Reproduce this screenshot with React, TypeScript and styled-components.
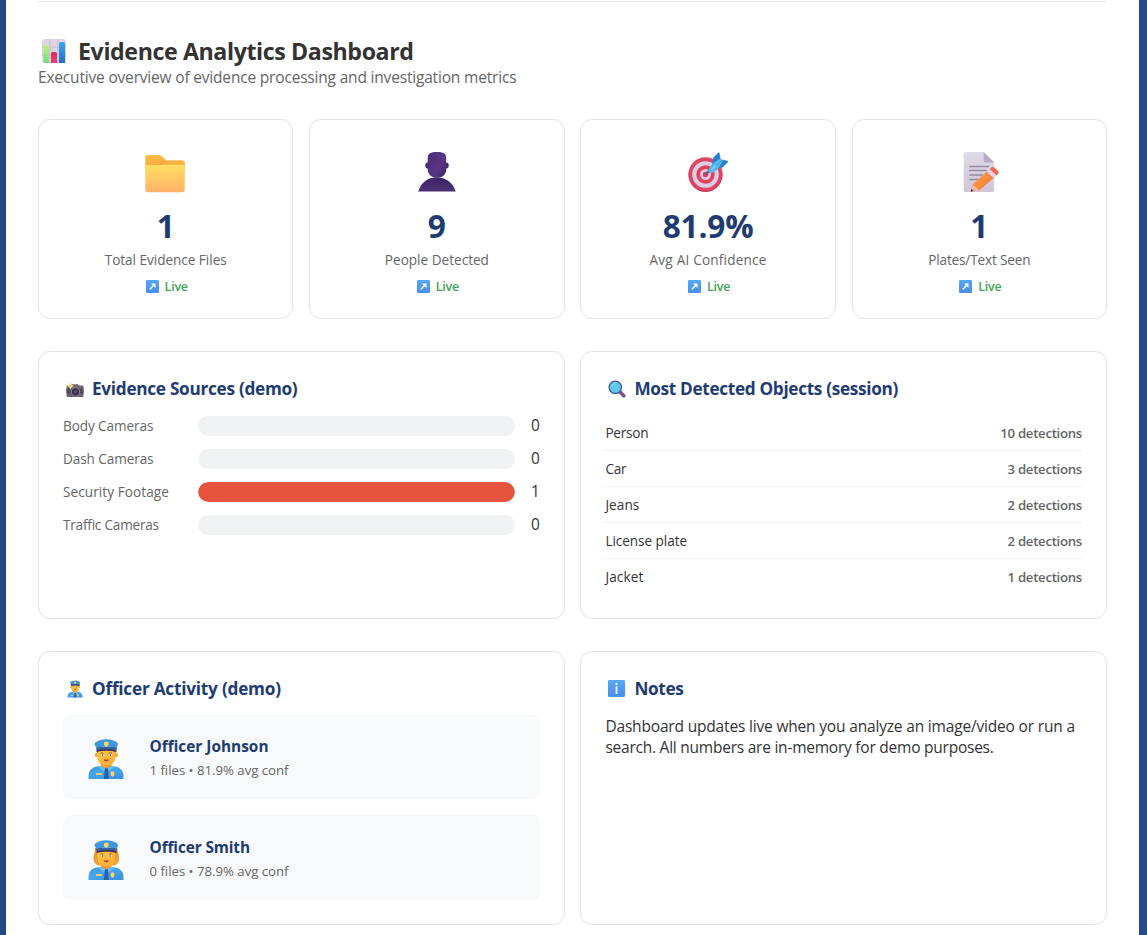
import React, { ReactNode } from 'react';
import styled, { createGlobalStyle } from 'styled-components';

const navy = '#1e3c72';

const GlobalStyle = createGlobalStyle`
  * { box-sizing: border-box; }
  html, body { margin: 0; padding: 0; height: 100%; overflow: hidden; }
  body {
    font-family: "Segoe UI", "Open Sans", "Noto Sans", sans-serif;
    font-size: 15.5px;
    color: #333;
    background: linear-gradient(90deg, #234781, #264d8b);
  }
  h1, h2, h3, p { margin: 0; }
  svg { display: block; flex: none; }
`;

const Page = styled.main`
  height: 935px;
  margin: 0 8px 0 6px;
  padding: 1px 32px 0;
  background: #fff;
`;

const Header = styled.header`
  height: 118px;
  border-top: 1px solid #e3e5e6;
  padding-top: 34px;
`;

const Tracked = styled.span<{ $ls?: number }>`
  letter-spacing: ${(p) => p.$ls ?? 0}px;
  white-space: nowrap;
`;

const Title = styled.h1`
  display: flex;
  align-items: center;
  gap: 11px;
  height: 30px;
  padding-left: 3px;
  font-size: 23.2px;
  line-height: 30px;
  font-weight: 700;
`;

const Subtitle = styled.p`
  margin-top: 1px;
  line-height: 21px;
  color: #666;
`;

const StatGrid = styled.section`
  display: grid;
  grid-template-columns: 255.4px 255.4px 255.4px 1fr;
  gap: 15.8px;
  margin-bottom: 32px;
`;

const Card = styled.div`
  border: 1px solid #e1e3e7;
  border-radius: 12px;
  background: #fff;
`;

const StatCard = styled(Card)`
  height: 200px;
  padding-top: 31px;
  display: flex;
  flex-direction: column;
  align-items: center;
`;

const StatValue = styled.div`
  margin-top: 11px;
  height: 44px;
  line-height: 44px;
  font-size: 31.6px;
  font-weight: 700;
  color: ${navy};
`;

const StatLabel = styled.div`
  margin-top: 2px;
  height: 20px;
  line-height: 20px;
  font-size: 13.6px;
  color: #666;
`;

const Live = styled.div`
  display: flex;
  align-items: center;
  gap: 6px;
  margin-top: 8px;
  padding-left: 2px;
  height: 18px;
  font-size: 12.5px;
  line-height: 18px;
  font-weight: 600;
  color: #3fa458;

  svg { margin-bottom: 1px; }
`;

const PanelGrid = styled.section<{ $height: number }>`
  display: grid;
  grid-template-columns: 526.6px 1fr;
  grid-template-rows: ${(p) => p.$height}px;
  gap: 15.8px;
  margin-bottom: 32px;
`;

const Panel = styled(Card)`
  padding: 24px;
`;

const PanelTitle = styled.h2`
  display: flex;
  align-items: center;
  height: 25px;
  font-size: 17.2px;
  line-height: 25px;
  font-weight: 700;
  color: ${navy};
`;

const TitleIcon = styled.span`
  display: flex;
  justify-content: center;
  width: 23px;
  margin-right: 6px;
`;

const SourceList = styled.div`
  display: grid;
  gap: 13px;
  margin-top: 15px;
`;

const SourceRow = styled.div`
  display: flex;
  align-items: center;
  height: 20px;
`;

const SourceName = styled.div`
  width: 135px;
  height: 20px;
  line-height: 19px;
  font-size: 13.6px;
  color: #666;
`;

const Track = styled.div`
  flex: 1;
  height: 20px;
  border-radius: 10px;
  background: #f1f2f4;
  overflow: hidden;
`;

const Fill = styled.div`
  height: 100%;
  border-radius: 10px;
  background: #e5533c;
`;

const SourceCount = styled.div`
  width: 24.5px;
  height: 20px;
  padding-left: 16px;
  font-size: 15.4px;
  line-height: 19px;
`;

const ObjectList = styled.div`
  margin-top: 14px;
`;

const ObjectRow = styled.div`
  display: flex;
  justify-content: space-between;
  align-items: center;
  height: 36px;
  font-size: 13.6px;
  border-bottom: 1px solid #f0f1f3;
  &:last-child { border-bottom-color: transparent; }
`;

const Detections = styled.span`
  font-size: 13.2px;
  font-weight: 600;
  color: #666;
  padding-top: 1px;
`;

const OfficerList = styled.div`
  display: grid;
  gap: 16px;
  margin-top: 14px;
`;

const OfficerCard = styled.div`
  display: flex;
  align-items: center;
  height: 84.4px;
  padding: 4px 0 0 22px;
  border-radius: 8px;
  background: #f8f9fb;
`;

const OfficerText = styled.div`
  margin: -1px 0 0 22.5px;
`;

const OfficerName = styled.div`
  font-size: 15.4px;
  line-height: 24px;
  font-weight: 700;
  color: ${navy};
`;

const OfficerMeta = styled.div`
  font-size: 13.2px;
  line-height: 23px;
  color: #666;
`;

const Note = styled.p`
  margin-top: 15px;
  line-height: 21px;
`;

const ChartIcon = () => (
  <svg width="26" height="26" viewBox="0 0 26 26">
    <defs>
      <linearGradient id="gGreen" x1="0" y1="0" x2="0" y2="1"><stop stopColor="#c5f07a" /><stop offset="1" stopColor="#70dc80" /></linearGradient>
      <linearGradient id="gRed" x1="0" y1="0" x2="0" y2="1"><stop stopColor="#d42c68" /><stop offset="1" stopColor="#f23c78" /></linearGradient>
      <linearGradient id="gBlue" x1="0" y1="0" x2="0" y2="1"><stop stopColor="#3ba7ee" /><stop offset="1" stopColor="#2170c4" /></linearGradient>
    </defs>
    <rect x="1" y="1" width="24" height="24" rx="3" fill="#dcd5e4" />
    <path d="M1 9h24M1 17h24M9 1v24M17 1v24" stroke="#c4bccf" strokeWidth="1" />
    <path d="M2.500 25V8.500q0-1.500 1.500-1.500h2.500q1.500 0 1.500 1.500V25z" fill="url(#gGreen)" />
    <path d="M10 25v-9.500q0-1.500 1.500-1.500h3q1.500 0 1.500 1.500V25z" fill="url(#gRed)" />
    <path d="M18 25V5.500q0-1.500 1.500-1.500h3q1.500 0 1.500 1.500V25z" fill="url(#gBlue)" />
  </svg>
);

const FolderIcon = () => (
  <svg width="42" height="42" viewBox="0.7 0 42 42">
    <defs>
      <linearGradient id="fFront" x1="0" y1="0" x2="0" y2="1"><stop stopColor="#ffdf62" /><stop offset="1" stopColor="#ffb268" /></linearGradient>
      <linearGradient id="fBack" x1="0" y1="0" x2="0" y2="1"><stop stopColor="#ffbd45" /><stop offset="1" stopColor="#f3a23a" /></linearGradient>
    </defs>
    <path d="M1 6q0-2 2-2h12q1.300 0 2.200.9L20.500 8q1 1.200 2.500 1.200h15q2.500 0 2.500 2.500V20H1z" fill="url(#fBack)" />
    <path d="M1 16q0-2 2-2h12.500q1.200 0 2-.1.800-.1 2-.1H38.500q2 0 2 2v22.400q0 3-3 3H4q-3 0-3-3z" fill="url(#fFront)" />
  </svg>
);

const PersonIcon = () => (
  <svg width="42" height="42" viewBox="0.3 0 42 42">
    <defs>
      <linearGradient id="pBody" x1="0" y1="0" x2="0" y2="1"><stop stopColor="#3c2565" /><stop offset="1" stopColor="#4c3276" /></linearGradient>
      <linearGradient id="pHead" x1="0" y1="0" x2="1" y2="1"><stop stopColor="#4a2d76" /><stop offset=".6" stopColor="#573584" /><stop offset="1" stopColor="#402664" /></linearGradient>
    </defs>
    <path d="M2.500 40.500C5.500 31 12 26.500 21 26.500s16 4.500 19 14z" fill="url(#pBody)" />
    <ellipse cx="11.800" cy="14.500" rx="2.200" ry="3" fill="#432869" />
    <ellipse cx="30.800" cy="14.500" rx="2.200" ry="3" fill="#432869" />
    <path d="M12 7C12 2.500 15 1 21.200 1S30.500 2.500 30.500 7v11.500c0 5-3.800 8.300-9.200 8.300S12 23.500 12 18.500z" fill="url(#pHead)" />
    <path d="M22 4.500q4 .2 6 2.500" stroke="#714b9c" strokeWidth="1.500" fill="none" strokeLinecap="round" opacity=".5" />
  </svg>
);

const TargetIcon = () => (
  <svg width="42" height="42" viewBox="0 0 42 42">
    <circle cx="18.500" cy="24" r="17" fill="#c9375c" />
    <circle cx="18.500" cy="23.300" r="17" fill="#e04463" />
    <circle cx="18.500" cy="23.500" r="13.300" fill="#dccfe5" />
    <circle cx="18.500" cy="23.500" r="9.200" fill="#e83e5c" />
    <circle cx="18.500" cy="23.500" r="5.500" fill="#dccfe5" />
    <circle cx="18.500" cy="23.500" r="2.700" fill="#d84563" />
    <path d="M19.500 22.500l6-5" stroke="#6f5b78" strokeWidth="2.600" strokeLinecap="round" />
    <path d="M25 13.500l1-6q.300-1 1.200-1.800L31 1.700q1.200-1 1.500.6l1.200 6.200 6.500 1.300q1.300.4.500 1.600l-4.500 4.400q-.8.800-1.800 1l-6.500.7z" fill="#2a80d0" />
    <path d="M33.500 7.500l2.500 2.500-5.500 8.500q-4.500 3.500-7.500 3.500-2-.8-1.500-3 1-4 5-7z" fill="#55b8eb" />
    <path d="M24.500 18.500l9-8" stroke="#83d4f6" strokeWidth="1.300" strokeLinecap="round" />
    <path d="M28.500 15l7-6" stroke="#318bd2" strokeWidth="1" />
  </svg>
);

const MemoIcon = () => (
  <svg width="42" height="42" viewBox="-0.7 0 42 42">
    <defs>
      <linearGradient id="mPaper" x1="0" y1="0" x2="0" y2="1"><stop stopColor="#dfdae7" /><stop offset="1" stopColor="#d0c6da" /></linearGradient>
      <linearGradient id="mPencil" x1="0" y1="0" x2="1" y2="1"><stop stopColor="#ffa64a" /><stop offset="1" stopColor="#f37331" /></linearGradient>
    </defs>
    <path d="M5 3q0-2 2-2h18l10.500 10.500V39q0 2-2 2H7q-2 0-2-2z" fill="url(#mPaper)" />
    <path d="M25 1l10.500 10.500H27q-2 0-2-2z" fill="#b6abc0" />
    <path d="M11 15.500h19M11 19.500h17M11 24h13M11 28.500h9" stroke="#978ca1" strokeWidth="1.300" strokeLinecap="round" />
    <path d="M12 40.800l2-7.300L28 20.500l7 6.500-14.500 12.300z" fill="url(#mPencil)" />
    <path d="M12 40.800l2-7.300 6.500 5.800z" fill="#e9bda2" />
    <path d="M12 40.800l.7-3 2.300 2.200z" fill="#4d344d" />
    <path d="M28 20.500l3-2.600 7 6.600-3 2.500z" fill="#ded2e5" />
    <path d="M31 17.900l2-1.600q1.300-.9 2.500.2l4 3.800q1 1.200 0 2.300l-1.500 1.900z" fill="#fa6247" />
  </svg>
);

const ArrowIcon = () => (
  <svg width="13" height="13" viewBox="0 0 13 13">
    <defs><linearGradient id="sq" x1="0" y1="0" x2="0" y2="1"><stop stopColor="#55a8f4" /><stop offset="1" stopColor="#4a8ee8" /></linearGradient></defs>
    <rect width="13" height="13" rx="1.300" fill="url(#sq)" />
    <path d="M3.800 9.200L7.500 5.500" stroke="#fff" strokeWidth="1.600" />
    <path d="M5 3.500h4.500V8z" fill="#fff" />
  </svg>
);

const CameraIcon = () => (
  <svg width="18" height="18" viewBox="0 0 18 18">
    <path d="M.5 6.500q0-1 1-1h3L5.700 4.200h6l1.300 1.300h3.500q1 0 1 1V16q0 1-1 1h-15q-1 0-1-1z" fill="#6d6478" />
    <path d="M.5 8.500h17v5H.5z" fill="#514a5c" />
    <circle cx="9.500" cy="11.800" r="4.600" fill="#8b8297" />
    <circle cx="9.500" cy="11.800" r="3.600" fill="#342e44" />
    <circle cx="9.500" cy="11.800" r="1.800" fill="#5b5270" />
    <path d="M4.500 2.500l1.300 2.200L8 6 5.800 7.300 4.500 9.500 3.200 7.300 1 6l2.200-1.300z" fill="#f5d675" />
  </svg>
);

const SearchIcon = () => (
  <svg width="18" height="18" viewBox="0 0 18 18">
    <path d="M11.500 11.500l4.300 4.300" stroke="#7d5189" strokeWidth="3.600" strokeLinecap="round" />
    <circle cx="7.300" cy="7.300" r="6.200" fill="#5fc8ec" stroke="#425d94" strokeWidth="1.300" />
    <path d="M3.500 6.500q.7-2.500 3.300-3" stroke="#8bdcf5" strokeWidth="1.200" fill="none" strokeLinecap="round" />
  </svg>
);

const InfoIcon = () => (
  <svg width="17" height="17" viewBox="0 0 17 17">
    <rect width="17" height="17" rx="1.200" fill="url(#sq)" />
    <circle cx="8.500" cy="4" r="1.200" fill="#e8f2ff" />
    <rect x="7.600" y="6.300" width="1.900" height="7.700" rx=".6" fill="#e8f2ff" />
  </svg>
);

const OfficerIcon = ({ size, female }: { size: number; female?: boolean }) => (
  <svg width={size} height={size} viewBox="0 0 42 42">
    <defs>
      <linearGradient id="oShirt" x1="0" y1="0" x2="1" y2="1"><stop stopColor="#3e94dd" /><stop offset=".4" stopColor="#45a7ed" /><stop offset="1" stopColor="#3d8ede" /></linearGradient>
      <linearGradient id="oFace" x1="0" y1="0" x2="1" y2="1"><stop stopColor="#ffc838" /><stop offset="1" stopColor="#f9a83a" /></linearGradient>
      <linearGradient id="oHair" x1="0" y1="0" x2="0" y2="1"><stop stopColor="#e58e35" /><stop offset="1" stopColor="#f7a43c" /></linearGradient>
    </defs>
    {female ? (
      <path d="M10 9h22.500c0 5 1.800 7 1.500 11s-2.500 6.500-5.500 6.500h-14C11 26.500 9 24 8.600 20.500 8.300 16 10 14 10 9z" fill="url(#oHair)" />
    ) : (
      <path d="M12 12h18.500v5.500H12z" fill="#6a3c41" />
    )}
    <path d="M3.500 41v-3c0-6 4.500-9.800 10.500-9.800h14c6 0 10.500 3.800 10.500 9.800v3z" fill="url(#oShirt)" />
    <path d="M16 23h10.500v6L21.300 33 16 29z" fill="#f39b32" />
    {!female && <><circle cx="12" cy="17" r="2.300" fill="#f7aa38" /><circle cx="30.700" cy="17" r="2.300" fill="#f7aa38" /></>}
    <path d="M12.500 11h17.700v8.500c0 5-3.500 8-8.900 8s-8.800-3-8.800-8z" fill="url(#oFace)" />
    <path d="M15.500 15.300q1.500-1 3 0M24 15.300q1.500-1 3 0" stroke="#71403a" strokeWidth=".8" fill="none" />
    <circle cx="17.300" cy="17" r="1.300" fill="#fff" /><circle cx="25.500" cy="17" r="1.300" fill="#fff" />
    <circle cx="17.500" cy="17" r=".8" fill="#4b3141" /><circle cx="25.300" cy="17" r=".8" fill="#4b3141" />
    <path d="M19.300 22q2 1.800 4 0z" fill="#b93450" stroke="#b93450" strokeWidth=".9" />
    <path d="M11.500 9h20v5q-10-2.300-20 0z" fill="#443659" />
    <path d="M9.500 6.500c0-1.500 1-2.300 2.500-3 5.500-3 13-3 18.500 0 1.500.7 2.500 1.500 2.500 3 0 1.200-1.300 1.600-1.500 3.700-6-1.900-14-1.900-20 0-.2-2.100-2-2.500-2-3.700z" fill="#3d96de" />
    <path d="M11.500 10q9.800-2.600 20 0l-.5 2q-9.500-2-19 0z" fill="#3461a0" />
    <path d="M21.300 3.500l2.300.8v2q0 1.800-2.300 2.700Q19 8.100 19 6.300v-2z" fill="#ffd35d" />
    <path d="M15.500 27.500l-1.500 2 4.500 3.500 2.800-3 2.800 3 4.500-3.500-1.500-2-5.800 3z" fill="#67bef7" />
    <path d="M20 30.300h2.800l1 10.700h-5z" fill="#2560a8" />
    <rect x="11" y="35" width="6" height="2" rx=".5" fill="#f3ce68" />
    <path d="M25.700 34l1.800-.8 1.800.8v2.600q0 1.400-1.800 2.200-1.800-.8-1.800-2.200z" fill="#ffd35d" />
  </svg>
);

type Stat = { icon: ReactNode; value: string; label: string; vls?: number; ls: number };

const stats: Stat[] = [
  { icon: <FolderIcon />, value: '1', label: 'Total Evidence Files', ls: -0.04 },
  { icon: <PersonIcon />, value: '9', label: 'People Detected', ls: -0.01 },
  { icon: <TargetIcon />, value: '81.9%', label: 'Avg AI Confidence', vls: -0.2, ls: 0.19 },
  { icon: <MemoIcon />, value: '1', label: 'Plates/Text Seen', ls: -0.17 },
];

const sources = [
  { name: 'Body Cameras', count: 0, ls: -0.1 },
  { name: 'Dash Cameras', count: 0, ls: -0.1 },
  { name: 'Security Footage', count: 1, ls: 0.07 },
  { name: 'Traffic Cameras', count: 0, ls: -0.22 },
];

const objects = [
  { name: 'Person', count: 10, ls: -0.25 },
  { name: 'Car', count: 3, ls: -0.2 },
  { name: 'Jeans', count: 2, ls: 0.05 },
  { name: 'License plate', count: 2, ls: -0.06 },
  { name: 'Jacket', count: 1, ls: 0.1 },
];

const officers = [
  { name: 'Officer Johnson', meta: '1 files • 81.9% avg conf', ls: 0, female: false },
  { name: 'Officer Smith', meta: '0 files • 78.9% avg conf', ls: -0.12, female: true },
];

const maxCount = Math.max(...sources.map((s) => s.count));

export default function App() {
  return (
    <>
      <GlobalStyle />
      <Page>
        <Header>
          <Title><ChartIcon /><Tracked $ls={-0.4}>Evidence Analytics Dashboard</Tracked></Title>
          <Subtitle><Tracked $ls={-0.185}>Executive overview of evidence processing and investigation metrics</Tracked></Subtitle>
        </Header>

        <StatGrid>
          {stats.map((s) => (
            <StatCard key={s.label}>
              {s.icon}
              <StatValue><Tracked $ls={s.vls}>{s.value}</Tracked></StatValue>
              <StatLabel><Tracked $ls={s.ls}>{s.label}</Tracked></StatLabel>
              <Live><ArrowIcon /><Tracked $ls={-0.25}>Live</Tracked></Live>
            </StatCard>
          ))}
        </StatGrid>

        <PanelGrid $height={268}>
          <Panel>
            <PanelTitle><TitleIcon><CameraIcon /></TitleIcon><Tracked $ls={-0.28}>Evidence Sources (demo)</Tracked></PanelTitle>
            <SourceList>
              {sources.map((s) => (
                <SourceRow key={s.name}>
                  <SourceName><Tracked $ls={s.ls}>{s.name}</Tracked></SourceName>
                  <Track>{s.count > 0 && <Fill style={{ width: `${(s.count / maxCount) * 100}%` }} />}</Track>
                  <SourceCount>{s.count}</SourceCount>
                </SourceRow>
              ))}
            </SourceList>
          </Panel>
          <Panel>
            <PanelTitle><TitleIcon><SearchIcon /></TitleIcon><Tracked $ls={-0.32}>Most Detected Objects (session)</Tracked></PanelTitle>
            <ObjectList>
              {objects.map((o) => (
                <ObjectRow key={o.name}>
                  <Tracked $ls={o.ls}>{o.name}</Tracked>
                  <Detections><Tracked $ls={-0.28}>{o.count} detections</Tracked></Detections>
                </ObjectRow>
              ))}
            </ObjectList>
          </Panel>
        </PanelGrid>

        <PanelGrid $height={274}>
          <Panel>
            <PanelTitle><TitleIcon><OfficerIcon size={18} /></TitleIcon><Tracked $ls={-0.22}>Officer Activity (demo)</Tracked></PanelTitle>
            <OfficerList>
              {officers.map((o) => (
                <OfficerCard key={o.name}>
                  <OfficerIcon size={42} female={o.female} />
                  <OfficerText>
                    <OfficerName><Tracked $ls={o.ls}>{o.name}</Tracked></OfficerName>
                    <OfficerMeta><Tracked $ls={-0.01}>{o.meta}</Tracked></OfficerMeta>
                  </OfficerText>
                </OfficerCard>
              ))}
            </OfficerList>
          </Panel>
          <Panel>
            <PanelTitle><TitleIcon><InfoIcon /></TitleIcon><Tracked $ls={-0.33}>Notes</Tracked></PanelTitle>
            <Note>
              <Tracked $ls={-0.175}>Dashboard updates live when you analyze an image/video or run a</Tracked>{' '}
              <Tracked $ls={-0.235}>search. All numbers are in-memory for demo purposes.</Tracked>
            </Note>
          </Panel>
        </PanelGrid>
      </Page>
    </>
  );
}
